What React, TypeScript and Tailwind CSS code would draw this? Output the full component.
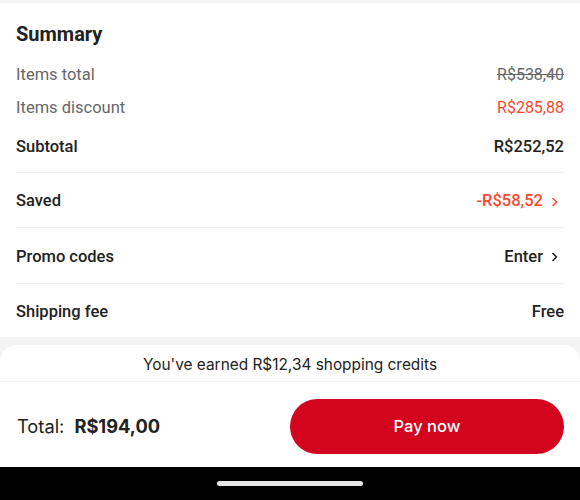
import { ReactNode } from 'react';

const Chevron = ({ color }: { color: string }) => (
  <svg width="10" height="12" viewBox="0 0 10 12" className="ml-[7px] mr-[4px]" fill="none">
    <path d="M3 2.5 L6.5 6 L3 9.5" stroke={color} strokeWidth="1.6" strokeLinecap="round" strokeLinejoin="round" />
  </svg>
);

const Row = ({ label, children, h }: { label: string; children: ReactNode; h: string }) => (
  <div className={`flex items-center justify-between border-t border-[#efefef] pt-[3px] ${h}`}>
    <span className="text-[16.5px] font-medium text-[#222]">{label}</span>
    <div className="flex items-center">{children}</div>
  </div>
);

const App = () => {
  return (
    <div className="w-[580px] h-[500px] flex flex-col bg-[#f3f3f3] overflow-hidden">
      <div className="h-[3px] shrink-0" />

      <div className="bg-white px-4 font-['Roboto',sans-serif] shrink-0">
        <h2 className="pt-[17px] h-[45px] leading-[28px] text-[20px] font-bold text-[#222]">Summary</h2>

        <div className="mt-[15px] flex justify-between leading-[24px] text-[16.5px] text-[#666]">
          <span>Items total</span>
          <span className="line-through text-[16px]">R$538,40</span>
        </div>
        <div className="mt-[9px] flex justify-between leading-[24px] text-[16.5px] text-[#666]">
          <span>Items discount</span>
          <span className="text-[#fb4a2f] text-[16px]">R$285,88</span>
        </div>
        <div className="mt-[15px] pb-[13px] flex justify-between leading-[24px] text-[16.5px] font-medium text-[#222]">
          <span>Subtotal</span>
          <span>R$252,52</span>
        </div>

        <Row label="Saved" h="h-[55px]">
          <span className="text-[16.5px] font-medium text-[#fb4a2f]">-R$58,52</span>
          <Chevron color="#fb4a2f" />
        </Row>
        <Row label="Promo codes" h="h-[56px]">
          <span className="text-[16.5px] font-medium text-[#222]">Enter</span>
          <Chevron color="#222" />
        </Row>
        <Row label="Shipping fee" h="h-[54px]">
          <span className="text-[16.5px] font-medium text-[#222]">Free</span>
        </Row>
      </div>

      <div className="h-[8px] shrink-0" />

      <div className="bg-white rounded-t-2xl font-['Inter',sans-serif] shrink-0">
        <div className="h-[37px] pt-[3px] flex items-center justify-center border-b border-[#f0f0f0] text-[15.4px] text-[#222]">
          You've earned R$12,34 shopping credits
        </div>
        <div className="h-[85px] pt-[4px] flex items-center justify-between pl-[17px] pr-4">
          <div className="flex items-baseline text-[18.3px] text-[#222]">
            <span>Total:</span>
            <span className="ml-[10px] font-bold">R$194,00</span>
          </div>
          <button className="w-[274px] h-[55px] rounded-full bg-[#d2041e] text-white text-[16.5px] font-medium">
            Pay now
          </button>
        </div>
      </div>

      <div className="h-[33px] shrink-0 bg-black flex items-center justify-center">
        <div className="w-[146px] h-[5px] rounded-full bg-[#e6e6e6]" />
      </div>
    </div>
  );
};

export default App;
